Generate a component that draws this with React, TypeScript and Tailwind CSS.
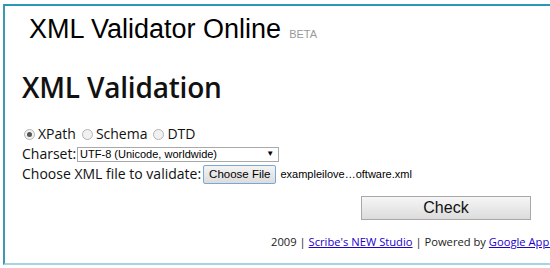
const Radio = ({ checked, label }: { checked?: boolean; label: string }) => (
  <label className="flex items-center mr-[4px]">
    <span className="w-[11px] h-[11px] rounded-full border border-[#b5b5b5] bg-[#f1f1f1] flex items-center justify-center mx-[2px]">
      {checked && <span className="w-[5px] h-[5px] rounded-full bg-[#555]" />}
    </span>
    <span className="ml-[1px]">{label}</span>
  </label>
);

export default function App() {
  return (
    <div className="w-[550px] h-[268px] overflow-hidden bg-white">
      <div className="ml-[3px] mt-[4px] w-[640px] h-[261px] border-l-[2px] border-t-[2px] border-l-[#3d98b0] border-t-[#2a97b5] border-b-[2px] border-b-[#a6d5e1] relative">
        <div className="flex items-baseline pl-[24px] pt-[8px] font-['Liberation_Sans',Arial,sans-serif]">
          <h1 className="text-[27px] leading-[31px] text-black">XML Validator Online</h1>
          <span className="ml-[8px] text-[11px] text-[#999]">BETA</span>
        </div>
        <div className="pl-[17px] font-['Open_Sans','Noto_Sans',sans-serif] text-[#111]">
          <h2 className="mt-[24px] text-[28px] leading-[36px] font-semibold tracking-[-0.2px]">XML Validation</h2>
          <div className="mt-[19px] flex items-center text-[14px] leading-[20px]">
            <Radio checked label="XPath" />
            <Radio label="Schema" />
            <Radio label="DTD" />
          </div>
          <div className="flex items-center text-[14px] leading-[20px]">
            <span>Charset:</span>
            <div className="ml-[1px] w-[202px] h-[15px] border border-[#a9a9a9] flex items-center justify-between pl-[2px] pr-[4px] font-['Liberation_Sans',Arial,sans-serif] text-[11px] text-black">
              <span>UTF-8 (Unicode, worldwide)</span>
              <span className="text-[8px]">▼</span>
            </div>
          </div>
          <div className="flex items-center text-[14px] leading-[20px]">
            <span>Choose XML file to validate:</span>
            <span className="ml-[2px] h-[19px] px-[5px] flex items-center rounded-[2px] border border-[#7aa7d8] bg-gradient-to-b from-[#f4f4f4] to-[#dcdcdc] font-['Liberation_Sans',Arial,sans-serif] text-[11.5px] text-black">Choose File</span>
            <span className="ml-[4px] font-['Liberation_Sans',Arial,sans-serif] text-[11px] text-black">exampleilove…oftware.xml</span>
          </div>
          <div className="mt-[12px] ml-[339px] w-[170px] h-[24px] border border-[#a8a8a8] bg-gradient-to-b from-[#f6f6f6] to-[#dcdcdc] flex items-center justify-center font-['Liberation_Sans',Arial,sans-serif] text-[16px] text-[#111]">
            Check
          </div>
          <div className="mt-[14px] ml-[249px] whitespace-nowrap text-[11.2px] text-[#222]">
            2009 | <a className="underline text-[#2200cc]">Scribe's NEW Studio</a> | Powered by{" "}
            <a className="underline text-[#2200cc]">Google App Engine</a>
          </div>
        </div>
      </div>
    </div>
  );
}
